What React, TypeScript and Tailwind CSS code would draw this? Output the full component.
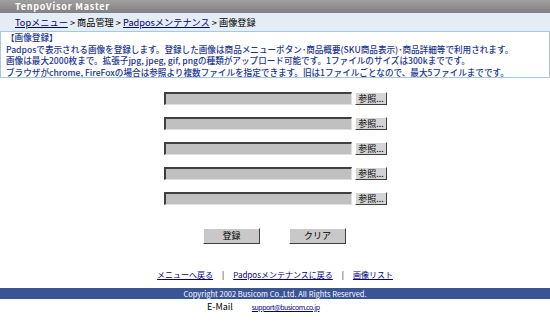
import React from 'react'

const FileRow: React.FC = () => (
  <div className="flex items-center gap-[3px] h-[13px]">
    <div className="w-[188px] h-[13px] bg-[#c0c0c0] border-t-2 border-l-2 border-t-[#404040] border-l-[#404040] border-b border-r border-b-[#e0e0e0] border-r-[#e0e0e0]" />
    <button className="w-[32px] h-[13px] bg-[#d4d4d4] border border-t-white border-l-white border-b-[#404040] border-r-[#404040] text-[9px] leading-[11px] text-black">
      参照...
    </button>
  </div>
)

const btn =
  'w-[57px] h-[16px] bg-[#c8c8c8] border border-t-white border-l-white border-b-[#404040] border-r-[#404040] text-[9px] leading-[14px] text-black'

const App: React.FC = () => {
  const font = { fontFamily: '"Noto Sans CJK JP", "Noto Sans", sans-serif' }
  return (
    <div className="w-[550px] h-[330px] bg-white overflow-hidden" style={font}>
      <div className="h-[13px] bg-gradient-to-b from-[#a0a0a0] to-[#808080] pl-[15px] text-white text-[9px] leading-[13px] font-bold tracking-[0.8px] overflow-hidden">
        TenpoVisor Master
      </div>
      <div className="h-[18px] bg-[#e4edf5] pl-[15px] text-[9.2px] leading-[18px] text-black whitespace-nowrap overflow-hidden">
        <a className="text-[#000080] underline">Topメニュー</a> &gt; 商品管理 &gt;{' '}
        <a className="text-[#000080] underline">Padposメンテナンス</a> &gt; 画像登録
      </div>
      <div className="h-[47px] border border-[#a8c8e0] pl-[5px] text-[#1a3590] text-[8.6px] font-medium whitespace-nowrap overflow-hidden">
        <div className="h-[11.5px] leading-[11.5px]">【画像登録】</div>
        <div className="h-[11.5px] leading-[11.5px]">Padposで表示される画像を登録します。登録した画像は商品メニューボタン･商品概要(SKU商品表示)･商品詳細等で利用されます。</div>
        <div className="h-[11.5px] leading-[11.5px]">画像は最大2000枚まで。拡張子jpg, jpeg, gif, pngの種類がアップロード可能です。1ファイルのサイズは300kまでです。</div>
        <div className="h-[11.5px] leading-[11.5px]">ブラウザがchrome, FireFoxの場合は参照より複数ファイルを指定できます。旧は1ファイルごとなので、最大5ファイルまでです。</div>
      </div>
      <div className="flex flex-col gap-[12px] pl-[164px] pt-[14px]">
        <FileRow />
        <FileRow />
        <FileRow />
        <FileRow />
        <FileRow />
      </div>
      <div className="flex gap-[29px] pl-[203px] pt-[23px]">
        <button className={btn}>登録</button>
        <button className={btn}>クリア</button>
      </div>
      <div className="mt-[25px] flex justify-center items-center gap-[9px] h-[12px] leading-[12px] text-[8px] text-black">
        <a className="text-[#000080] underline">メニューへ戻る</a>
        <span>|</span>
        <a className="text-[#000080] underline">Padposメンテナンスに戻る</a>
        <span>|</span>
        <a className="text-[#000080] underline">画像リスト</a>
      </div>
      <div className="mt-[7px] h-[11px] bg-[#3a5494] text-white text-[7.5px] leading-[11px] text-center">
        Copyright 2002 Busicom Co.,Ltd. All Rights Reserved.
      </div>
      <div className="flex items-center gap-[19px] pl-[207px] pt-[2px] h-[14px] text-black">
        <span className="text-[9px] leading-[12px]">E-Mail</span>
        <a className="text-[7px] leading-[12px] tracking-[-0.5px] text-[#000080] underline">support@busicom.co.jp</a>
      </div>
    </div>
  )
}

export default App
